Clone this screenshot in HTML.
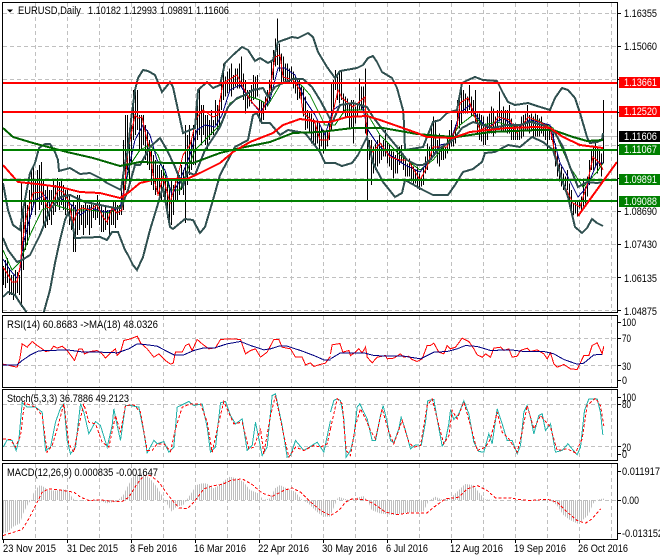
<!DOCTYPE html>
<html><head><meta charset="utf-8"><title>EURUSD,Daily</title>
<style>html,body{margin:0;padding:0;background:#fff}svg{display:block;position:absolute;left:0;top:0}text{font-family:"Liberation Sans",sans-serif;font-size:11px;fill:#000}.w{fill:#fff}.n path,.n polyline{vector-effect:non-scaling-stroke}</style></head><body>
<svg width="660" height="560" viewBox="0 0 660 560" xmlns="http://www.w3.org/2000/svg">
<defs>
<clipPath id="cm"><rect x="3" y="3" width="614" height="309"/></clipPath>
<clipPath id="ch"><path transform="translate(0,460) scale(.33333)" d="M8 120V220L25 215 40 200 60 190 70 160 85 130 95 120 100 100 110 85 120 75 130 80 145 90 165 92 190 88 205 90 215 110 225 122 300 122 320 130 350 125 370 105 385 75 400 50 415 40 430 40 450 55 470 80 485 105 500 130 515 155 530 140 550 135 570 105 590 75 605 70 620 70 640 85 660 75 675 60 690 50 710 55 730 65 750 90 775 100 790 120 810 115 825 85 840 75 860 85 885 95 905 118 925 130 950 155 970 170 990 170 1015 110 1030 115 1045 120 1090 108 1105 125 1115 150 1140 160 1180 165 1220 158 1270 155 1285 125 1305 110 1325 118 1350 115 1375 92 1395 72 1420 75 1435 95 1455 118 1490 120 1650 120 1670 135 1690 165 1710 180 1735 192 1765 165 1780 130 1790 120 1810 115 1815 120Z"/></clipPath>
</defs>
<!-- grid -->
<g stroke="#c0c0c0" stroke-width="1" stroke-dasharray="4 3" fill="none" shape-rendering="crispEdges">
<path d="M35.5 3V312M67.5 3V312M99.5 3V312M131.5 3V312M163.5 3V312M195.5 3V312M227.5 3V312M259.5 3V312M291.5 3V312M323.5 3V312M355.5 3V312M387.5 3V312M419.5 3V312M451.5 3V312M483.5 3V312M515.5 3V312M547.5 3V312M579.5 3V312M611.5 3V312"/>
<path d="M3 13.5H617M3 46.5H617M3 79.5H617M3 112.5H617M3 145.5H617M3 178.5H617M3 211.5H617M3 244.5H617M3 277.5H617M3 310.5H617"/>
<path d="M35.5 316V387M67.5 316V387M99.5 316V387M131.5 316V387M163.5 316V387M195.5 316V387M227.5 316V387M259.5 316V387M291.5 316V387M323.5 316V387M355.5 316V387M387.5 316V387M419.5 316V387M451.5 316V387M483.5 316V387M515.5 316V387M547.5 316V387M579.5 316V387M611.5 316V387M3 338.5H617M3 365.5H617"/>
<path d="M35.5 390V460M67.5 390V460M99.5 390V460M131.5 390V460M163.5 390V460M195.5 390V460M227.5 390V460M259.5 390V460M291.5 390V460M323.5 390V460M355.5 390V460M387.5 390V460M419.5 390V460M451.5 390V460M483.5 390V460M515.5 390V460M547.5 390V460M579.5 390V460M611.5 390V460M3 404.5H617M3 446.5H617"/>
<path d="M35.5 464V539M67.5 464V539M99.5 464V539M131.5 464V539M163.5 464V539M195.5 464V539M227.5 464V539M259.5 464V539M291.5 464V539M323.5 464V539M355.5 464V539M387.5 464V539M419.5 464V539M451.5 464V539M483.5 464V539M515.5 464V539M547.5 464V539M579.5 464V539M611.5 464V539M3 500.5H617"/>
</g>
<path d="M3 136.5H617" stroke="#c0c0c0" shape-rendering="crispEdges"/>
<g clip-path="url(#cm)" fill="none" shape-rendering="crispEdges">
<!-- bars -->
<path stroke="#000" stroke-width="1" d="M3.5 266V285M5.5 260V288M7.5 258V283M9.5 268V295M11.5 275V295M13.5 275V300M15.5 270V295M17.5 272V293M19.5 275V295M21.5 183V307M23.5 205V270M25.5 195V250M27.5 205V245M29.5 190V235M31.5 170V215M33.5 165V205M35.5 180V215M37.5 170V200M39.5 165V210M41.5 162V205M43.5 180V225M45.5 190V228M47.5 185V225M49.5 190V220M51.5 190V225M53.5 180V215M55.5 185V212M57.5 178V205M59.5 182V210M61.5 180V205M63.5 185V210M65.5 190V215M67.5 188V212M69.5 195V225M71.5 205V230M73.5 200V252M75.5 205V252M77.5 195V235M79.5 195V230M81.5 205V225M83.5 205V235M85.5 200V228M87.5 205V225M89.5 205V235M91.5 200V228M93.5 205V218M95.5 205V220M97.5 195V218M99.5 200V225M101.5 205V232M103.5 210V232M105.5 205V230M107.5 210V225M109.5 210V235M111.5 210V225M113.5 200V225M115.5 200V228M117.5 205V220M119.5 205V215M121.5 190V215M123.5 140V210M125.5 115V190M127.5 115V170M129.5 140V185M131.5 125V165M133.5 90V140M135.5 88V135M137.5 90V130M139.5 115V150M141.5 115V150M143.5 115V145M145.5 125V160M147.5 130V165M149.5 140V170M151.5 150V185M153.5 155V190M155.5 160V195M157.5 165V192M159.5 165V200M161.5 170V200M163.5 165V197M165.5 175V205M167.5 180V218M169.5 185V222M171.5 180V225M173.5 185V215M175.5 180V200M177.5 175V200M179.5 175V195M181.5 165V190M183.5 170V195M185.5 125V223M187.5 135V185M189.5 125V175M191.5 140V170M193.5 125V165M195.5 130V165M197.5 95V140M199.5 90V135M201.5 105V145M203.5 105V135M205.5 115V145M207.5 115V150M209.5 120V140M211.5 110V135M213.5 120V135M215.5 100V125M217.5 105V132M219.5 100V125"/>
<g class="n" transform="translate(220.5,0) scale(.33333)" stroke="#000" stroke-width="1"><path d="M3 250V330M9 190V300M15 230V290M21 215V280M27 205V275M33 190V290M39 225V270M45 205V260M51 205V265M57 190V265M63 170V260M69 220V300M75 240V340M81 270V325M87 270V320M93 255V310M99 225V300M105 230V295M111 225V290M117 300V365M123 305V365M129 305V360M135 290V330M141 270V320M147 240V300M153 180V280M159 150V240M165 115V200M171 55V195M177 130V215M183 160V250M189 170V245M195 190V250M201 190V250M207 205V250M213 200V250M219 215V265M225 230V280M231 240V300M237 240V295M243 260V310M249 265V350M255 290V390M261 330V385M267 335V400M273 340V430M279 355V435M285 370V435M291 360V430M297 365V450M303 385V440M309 390V460M315 400V450M321 395V440M327 370V420M333 250V390M339 240V340M345 210V270M351 230V300M357 215V310M363 210V300M369 280V340M375 290V350M381 295V350M387 310V385M393 300V385M399 300V430M405 320V370M411 310V350M417 235V330M423 260V330M429 260V330M435 205V400M441 340V605M447 420V480M453 420V555M459 440V520M465 430V510M471 420V500M477 405V490M483 430V480M489 420V470M495 390V470M501 425V490M507 435V500M513 450V510M519 455V535M525 465V520M531 450V520M537 440V495M543 435V490M549 460V510M555 470V530M561 490V530M567 475V530M573 490V545M579 500V550M585 510V550M591 500V565M597 520V570M603 530V560M609 500V555M615 470V520M621 430V510M627 440V490M633 380V480M639 350V460M645 360V450M651 420V490M657 400V500"/></g>
<g class="n" transform="translate(440.5,0) scale(.33333)" stroke="#000" stroke-width="1"><path d="M3 440V480M9 440V480M15 440V475M21 410V460M27 390V450M33 360V440M39 400V440M45 375V430M51 300V380M57 285V385M63 250V370M69 270V340M75 280V340M81 290V340M87 255V330M93 290V350M99 300V350M105 270V370M111 340V400M117 340V420M123 345V425M129 350V435M135 370V435M141 350V420M147 340V400M153 320V400M159 325V410M165 350V400M171 330V380M177 275V365M183 330V395M189 320V395M195 330V395M201 330V400M207 315V400M213 355V420M219 370V420M225 370V420M231 375V420M237 380V420M243 350V415M249 345V410M255 340V395M261 315V390M267 345V400M273 340V395M279 350V410M285 340V410M291 345V410M297 355V410M303 350V400M309 370V410M315 370V420M321 375V450M327 385V420M333 380V420M339 400V460M345 430V500M351 460V530M357 490V545M363 500V560M369 520V570M375 530V560M381 510V570M387 550V600M393 570V640M399 610V645M405 600V640M411 600V650M417 600V625M423 590V630M429 535V620M435 560V610M441 530V590M447 480V555M453 450V510M459 440V510M465 425V500M471 440V520M477 450V500M483 460V530M489 300V490"/></g>
<!-- thin MAs -->
<polyline stroke="#008000" stroke-width="1" points="3,250 12,270 20,262 30,235 42,210 55,205 70,210 90,210 110,213 121,205 130,165 140,150 150,145 158,155 170,190 180,190 195,150 210,135 220,125 230,103 245,95 260,100 268,105 280,85 295,78 310,95 325,125 335,125 345,110 365,110 380,135 400,155 420,170 433,160 447,143 460,125 473,115 483,125 497,122 513,127 537,120 553,128 570,167 583,187 597,172 603,163"/>
<polyline stroke="#000080" stroke-width="1" points="3,259 10,270 17,278 20,270 23,245 28,225 35,200 45,195 52,208 60,198 72,205 80,215 90,208 105,212 120,208 126,180 135,140 143,125 150,135 157,160 165,170 172,195 180,180 190,155 197,130 205,125 215,127 222,115 230,90 240,85 250,100 260,112 270,100 278,68 285,68 295,75 305,100 315,115 325,135 333,110 340,105 350,103 362,105 368,130 378,145 390,155 405,165 420,172 430,160 440,145 450,143 460,113 470,105 477,117 487,128 503,118 517,128 530,120 550,125 560,163 568,177 578,197 587,187 597,163 603,163"/>
<polyline stroke="#f00" stroke-width="1" points="3,267 7,273 12,282 17,282 20,267 22,247 25,223 28,210 33,193 42,192 47,207 50,208 55,197 58,190 63,192 68,200 73,223 78,210 82,208 90,210 97,205 103,217 107,222 112,208 117,213 122,210 125,183 128,150 132,130 135,115 138,118 142,117 147,140 150,150 153,175 158,195 163,177 170,203 178,175 183,155 190,145 197,117 203,110 213,117 218,115 220,100 223,83 237,75 243,87 250,100 262,113 270,90 275,57 280,55 283,77 293,80 300,90 303,113 315,123 320,140 328,140 332,117 338,90 342,98 353,107 365,97 367,140 373,152 380,143 390,157 400,160 408,160 420,180 427,167 433,147 440,147 447,147 457,127 460,103 468,98 475,117 480,130 493,125 498,117 510,120 517,133 528,117 540,122 550,128 555,153 563,183 573,203 580,207 587,185 593,157 600,163 603,170"/>
<!-- bollinger -->
<g stroke="#2f4f4f" stroke-width="2">
<polyline points="3,183 8,210 13,225 20,230 22,217 23,210 30,173 35,163 39,148 45,144 50,144 55,152 58,160 59,171 70,168 80,174 90,173 100,178 107,183 121,190 125,163 128,150 131,120 135,90 138,78 143,70 148,71 155,75 162,92 170,82 173,87 178,110 183,133 195,128 198,90 207,82 213,88 220,85 225,63 233,55 242,47 248,50 255,61 260,58 268,63 273,60 278,42 292,37 298,38 308,33 313,37 318,52 327,67 335,78 340,71 357,68 363,65 368,58 373,56 377,62 382,72 392,78 397,88 403,110 404,123 405,150 423,147 433,122 440,120 447,113 457,110 462,83 468,80 475,77 483,80 497,81 503,93 508,102 515,105 528,103 537,106 550,110 555,98 562,88 568,90 575,98 580,113 587,137 590,143 597,142 602,140 603,133"/>
<polyline points="3,238 8,250 17,262 22,260 30,255 40,235 50,210 60,197 70,195 85,202 100,205 115,208 121,208 128,190 135,165 140,165 150,147 160,138 167,150 175,167 183,187 187,172 195,175 205,150 215,135 220,127 228,107 237,98 245,95 253,90 263,88 268,97 275,87 283,83 293,79 303,79 312,87 320,100 327,113 332,123 340,105 353,103 367,107 373,117 383,130 397,147 407,160 417,165 423,165 430,160 440,148 453,140 462,128 473,122 483,125 493,128 507,125 520,125 530,122 543,125 555,133 563,147 570,167 578,187 587,182 597,183 603,182"/>
<polyline points="3,297 8,292 15,295 20,303 25,310 28,315 43,315 50,290 55,263 60,240 65,220 68,213 72,222 75,238 100,237 107,240 112,232 118,232 125,250 128,255 133,265 137,270 143,257 150,230 157,207 163,187 170,227 173,229 185,219 193,220 200,233 205,227 213,200 220,175 235,147 248,140 253,115 257,113 262,123 270,123 280,135 288,130 305,133 313,143 320,152 325,163 335,163 342,166 352,163 358,155 367,137 373,163 383,182 395,197 402,193 405,180 423,190 433,195 448,195 455,185 463,172 473,169 482,162 485,153 495,152 508,145 520,147 532,137 543,142 553,150 562,180 568,197 575,227 582,233 587,228 592,219 597,223 603,226"/>
</g>
<!-- thick MAs -->
<polyline stroke="#006400" stroke-width="2" points="3,128 13,137 33,143 67,152 93,158 120,166 140,162 170,163 193,163 220,153 240,148 270,142 293,133 320,132 353,128 383,128 417,134 440,136 457,137 490,132 537,130 553,130 573,137 587,141 603,140"/>
<polyline stroke="#f00" stroke-width="2" points="3,165 10,173 18,182 37,184 60,187 80,192 100,193 120,198 128,193 140,183 157,179 187,179 200,173 220,163 233,152 250,142 273,133 283,125 300,119 320,122 330,122 347,117 367,116 380,120 400,127 417,133 427,137 453,138 470,132 507,128 537,127 550,128 563,137 580,145 603,148"/>
<!-- levels -->
<path stroke="#f00" stroke-width="2" d="M3 83H617M3 112H617"/>
<path stroke="#008000" stroke-width="2" d="M3 150H617M3 180H617M3 201H617"/>
<path stroke="#f00" stroke-width="2" d="M578 216L617 162"/>
</g>
<!-- RSI -->
<g class="n" fill="none" shape-rendering="crispEdges" stroke-width="1">
<g transform="translate(0.5,315.5) scale(.33333)">
<polyline stroke="#f00" points="8,146 20,148 35,152 50,155 58,130 65,85 80,95 95,78 110,90 125,100 135,108 150,105 160,92 170,98 185,92 200,105 215,125 222,135 235,100 245,100 252,115 270,108 290,105 305,115 315,128 330,112 345,100 350,120 360,110 370,75 390,70 410,62 420,82 440,100 460,125 475,115 495,135 510,146 518,143 525,110 545,110 555,90 565,85 575,105 590,72 605,85 625,100 645,97 660,72 690,70 720,72 735,115 750,105 765,100 780,125 800,110 820,72 835,72 845,95 870,100 885,125 905,125 915,148 930,142 940,153 955,148 975,143 990,122"/>
<polyline stroke="#000080" points="8,148 50,148 65,135 90,118 115,106 150,105 200,103 250,110 300,110 350,112 385,100 410,85 440,88 470,92 500,108 520,118 550,118 580,105 610,97 640,98 680,85 720,78 750,90 790,103 810,100 835,92 860,92 900,105 940,120 970,133 990,133"/>
<polyline stroke="#20b2aa" points="8,395 20,373 35,375 47,405 55,375 65,262 80,275 105,275 125,290 135,405 150,395 165,320 180,278 190,265 200,375 210,415 225,395 240,265 250,290 265,355 285,318 300,330 320,395 335,330 340,280 350,330 360,375 375,270 390,270 415,275 430,350 440,412 460,375 470,385 490,378 505,410 520,395 530,275 545,268 565,258 580,270 605,265 620,335 630,410 645,395 660,262 675,258 690,300 705,325 725,310 740,405 755,390 765,320 785,420 800,395 815,240 825,235 845,330 860,425 870,420 885,375 910,405 950,380 970,410 990,315"/>
<polyline stroke="#f00" stroke-dasharray="3 2" points="8,370 30,372 45,395 60,360 72,262 105,275 125,300 140,410 155,390 170,340 190,265 205,385 220,410 235,330 250,265 265,320 285,325 305,380 325,395 345,300 360,350 375,270 400,268 420,290 440,405 455,405 470,385 490,385 510,408 525,340 545,275 570,265 600,265 620,320 635,410 655,320 670,258 700,325 725,320 745,400 760,395 780,340 790,415 810,300 825,240 850,360 865,425 885,395 910,405 940,390 960,395 980,385 990,340"/>
</g>
<g transform="translate(330.5,315.5) scale(.33333)">
<polyline stroke="#f00" points="0,115 5,88 28,84 37,110 55,105 60,120 72,112 85,100 95,112 105,95 110,125 125,142 140,125 165,120 170,130 190,128 210,115 220,125 235,122 245,132 260,138 275,130 290,90 300,90 310,83 325,110 340,115 350,90 360,100 375,95 395,68 415,78 430,100 440,118 455,125 465,115 480,125 490,98 510,95 520,105 535,100 545,125 560,122 570,105 590,98 600,108 620,103 640,115 650,130 660,112 670,145 680,155 700,147 720,160 740,162 760,120 775,120 785,90 800,82 815,115 820,92"/>
<polyline stroke="#000080" points="0,130 30,112 100,112 130,120 170,122 220,122 270,130 310,110 350,108 380,100 405,90 440,93 480,105 540,103 580,108 640,108 670,115 700,132 740,146 760,143 790,118 815,117"/>
<polyline stroke="#20b2aa" points="0,290 10,255 20,250 30,255 40,310 47,425 60,405 70,365 80,275 88,265 100,290 110,310 125,375 135,375 150,300 158,270 170,320 180,375 190,382 205,340 212,305 225,345 240,400 255,388 272,390 285,320 292,255 310,252 320,310 335,392 345,375 355,325 360,283 370,312 385,295 400,256 415,295 430,380 445,408 460,410 475,355 485,385 500,280 515,325 530,375 545,375 560,415 570,390 580,290 590,270 600,305 610,355 625,300 635,295 645,345 660,325 675,410 695,405 712,385 740,418 750,395 762,285 775,250 800,250 810,290 817,358"/>
<polyline stroke="#f00" stroke-dasharray="3 2" points="0,340 20,250 35,265 47,405 60,420 75,330 90,280 105,310 120,345 135,370 155,280 175,350 190,385 215,315 235,380 250,395 270,390 290,270 305,250 325,330 340,385 355,360 365,285 380,310 400,260 420,330 440,405 465,395 480,370 500,290 515,350 535,370 560,410 575,350 590,270 610,340 630,300 660,335 680,405 710,400 735,412 755,370 770,270 795,248 810,270 820,332"/>
</g>
<!-- MACD -->
<g clip-path="url(#ch)"><line x1="3" y1="500" x2="617" y2="500" stroke="#bebebe" stroke-width="160" stroke-dasharray="1 1"/></g>
<polyline transform="translate(0.5,460.5) scale(.33333)" stroke="#f00" stroke-dasharray="3 2" points="8,225 30,218 65,207 85,175 105,135 125,95 145,85 175,88 200,92 220,95 240,110 265,120 300,118 330,122 365,123 385,110 410,70 430,45 450,45 475,65 500,100 520,125 535,142 560,145 580,125 610,85 640,75 665,72 690,60 725,55 755,72 785,98 815,108 850,90 875,82 900,95 925,120 960,150 990,165 1015,150 1035,125 1055,115 1095,118 1120,130 1155,155 1190,162 1230,157 1280,157 1300,140 1335,115 1375,110 1400,85 1430,75 1460,90 1485,112 1530,112 1555,117 1590,120 1640,116 1670,125 1700,155 1730,180 1755,188 1775,175 1800,145"/>
</g>
<!-- frames -->
<g fill="none" stroke="#000" stroke-width="1" shape-rendering="crispEdges">
<path d="M2.5 2.5H617.5V312.5H2.5ZM2.5 315.5H617.5V387.5H2.5ZM2.5 389.5H617.5V460.5H2.5ZM2.5 463.5H617.5V539.5H2.5Z"/>
<path d="M617 13.5h4M617 46.5h4M617 79.5h4M617 112.5h4M617 145.5h4M617 178.5h4M617 211.5h4M617 244.5h4M617 277.5h4M617 310.5h4M617 322.5h4M617 338.5h4M617 365.5h4M617 380.5h4M617 397.5h4M617 404.5h4M617 446.5h4M617 454.5h4M617 471.5h4M617 500.5h4M617 533.5h4"/>
<path d="M3.5 539v4M67.5 539v4M131.5 539v4M195.5 539v4M259.5 539v4M323.5 539v4M387.5 539v4M451.5 539v4M515.5 539v4M579.5 539v4"/>
</g>
<!-- header -->
<path d="M7 9.5h6l-3 3z" fill="#000"/>
<text x="18" y="14" textLength="63" lengthAdjust="spacingAndGlyphs">EURUSD,Daily</text>
<text x="88" y="14" textLength="33" lengthAdjust="spacingAndGlyphs">1.10182</text>
<text x="124" y="14" textLength="33" lengthAdjust="spacingAndGlyphs">1.12993</text>
<text x="160" y="14" textLength="33" lengthAdjust="spacingAndGlyphs">1.09891</text>
<text x="196" y="14" textLength="33" lengthAdjust="spacingAndGlyphs">1.11606</text>
<text x="7" y="328" textLength="151" lengthAdjust="spacingAndGlyphs">RSI(14) 60.8683  -&gt;MA(18) 48.0326</text>
<text x="7" y="402" textLength="122" lengthAdjust="spacingAndGlyphs">Stoch(5,3,3) 36.7886 49.2123</text>
<text x="7" y="476" textLength="151" lengthAdjust="spacingAndGlyphs">MACD(12,26,9) 0.000835 -0.001647</text>
<!-- main axis -->
<text x="624" y="17" textLength="33" lengthAdjust="spacingAndGlyphs">1.16355</text>
<text x="624" y="50" textLength="33" lengthAdjust="spacingAndGlyphs">1.15060</text>
<text x="624" y="215" textLength="33" lengthAdjust="spacingAndGlyphs">1.08690</text>
<text x="624" y="248" textLength="33" lengthAdjust="spacingAndGlyphs">1.07430</text>
<text x="624" y="282" textLength="33" lengthAdjust="spacingAndGlyphs">1.06135</text>
<text x="624" y="315" textLength="33" lengthAdjust="spacingAndGlyphs">1.04875</text>
<g shape-rendering="crispEdges">
<rect x="619" y="77" width="41" height="11" fill="#f00"/>
<rect x="619" y="106" width="41" height="11" fill="#f00"/>
<rect x="619" y="131" width="41" height="11" fill="#000"/>
<rect x="619" y="144" width="41" height="11" fill="#008000"/>
<rect x="619" y="174" width="41" height="11" fill="#008000"/>
<rect x="619" y="196" width="41" height="11" fill="#008000"/>
</g>
<text class="w" x="624" y="86" textLength="33" lengthAdjust="spacingAndGlyphs">1.13661</text>
<text class="w" x="624" y="115" textLength="33" lengthAdjust="spacingAndGlyphs">1.12520</text>
<text class="w" x="624" y="140" textLength="33" lengthAdjust="spacingAndGlyphs">1.11606</text>
<text class="w" x="624" y="153" textLength="33" lengthAdjust="spacingAndGlyphs">1.11067</text>
<text class="w" x="624" y="183" textLength="33" lengthAdjust="spacingAndGlyphs">1.09891</text>
<text class="w" x="624" y="205" textLength="33" lengthAdjust="spacingAndGlyphs">1.09088</text>
<!-- sub axes -->
<text x="622" y="326" textLength="14" lengthAdjust="spacingAndGlyphs">100</text>
<text x="622" y="342" textLength="9" lengthAdjust="spacingAndGlyphs">70</text>
<text x="622" y="370" textLength="9" lengthAdjust="spacingAndGlyphs">30</text>
<text x="622" y="384" textLength="5" lengthAdjust="spacingAndGlyphs">0</text>
<text x="622" y="401" textLength="14" lengthAdjust="spacingAndGlyphs">100</text>
<text x="622" y="408" textLength="9" lengthAdjust="spacingAndGlyphs">80</text>
<text x="622" y="451" textLength="9" lengthAdjust="spacingAndGlyphs">20</text>
<text x="622" y="458" textLength="5" lengthAdjust="spacingAndGlyphs">0</text>
<text x="622" y="475" textLength="38" lengthAdjust="spacingAndGlyphs">0.011917</text>
<text x="622" y="504" textLength="17" lengthAdjust="spacingAndGlyphs">0.00</text>
<text x="622" y="537" textLength="41" lengthAdjust="spacingAndGlyphs">-0.013152</text>
<!-- dates -->
<text x="3" y="552" textLength="53" lengthAdjust="spacingAndGlyphs">23 Nov 2015</text>
<text x="67" y="552" textLength="51" lengthAdjust="spacingAndGlyphs">31 Dec 2015</text>
<text x="130" y="552" textLength="47" lengthAdjust="spacingAndGlyphs">8 Feb 2016</text>
<text x="194" y="552" textLength="52" lengthAdjust="spacingAndGlyphs">16 Mar 2016</text>
<text x="258" y="552" textLength="51" lengthAdjust="spacingAndGlyphs">22 Apr 2016</text>
<text x="322" y="552" textLength="55" lengthAdjust="spacingAndGlyphs">30 May 2016</text>
<text x="386" y="552" textLength="42" lengthAdjust="spacingAndGlyphs">6 Jul 2016</text>
<text x="450" y="552" textLength="53" lengthAdjust="spacingAndGlyphs">12 Aug 2016</text>
<text x="514" y="552" textLength="52" lengthAdjust="spacingAndGlyphs">19 Sep 2016</text>
<text x="578" y="552" textLength="50" lengthAdjust="spacingAndGlyphs">26 Oct 2016</text>
</svg>
</body></html>
